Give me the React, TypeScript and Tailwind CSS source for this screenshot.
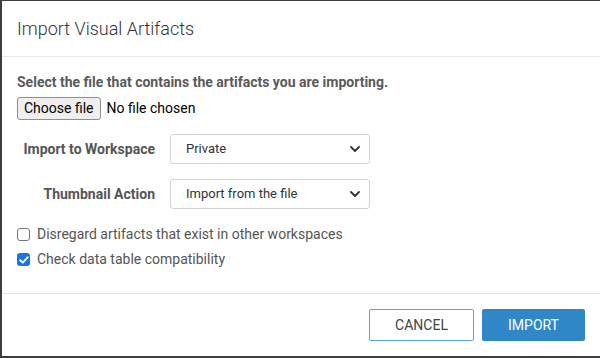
import React from 'react';

const Chevron = () => (
  <svg className="pointer-events-none absolute right-[9px] top-1/2 -translate-y-1/2" width="10" height="6" viewBox="0 0 10 6" fill="none">
    <path d="M1 1l4 4 4-4" stroke="#333" strokeWidth="1.8" strokeLinecap="round" strokeLinejoin="round" />
  </svg>
);

const FakeSelect = ({ value }: { value: string }) => (
  <div className="relative w-[200px] h-[30px] rounded-[3px] border border-[#d4d4d4] bg-white flex items-center pl-[15px] text-[13px] text-[#333]">
    {value}
    <Chevron />
  </div>
);

const Check = ({ checked, label }: { checked?: boolean; label: string }) => (
  <label className="flex items-center gap-[7px] h-[25px]">
    {checked ? (
      <span className="w-[13px] h-[13px] rounded-[3px] bg-[#1a73e8] flex items-center justify-center">
        <svg width="10" height="8" viewBox="0 0 10 8" fill="none">
          <path d="M1.2 4.2L3.8 6.6L8.8 1.2" stroke="white" strokeWidth="1.9" strokeLinecap="round" strokeLinejoin="round" />
        </svg>
      </span>
    ) : (
      <span className="w-[13px] h-[13px] rounded-[3px] border border-[#767676] bg-white" />
    )}
    <span className="text-[14px] text-[#555]">{label}</span>
  </label>
);

export default function App() {
  return (
    <div className="w-[600px] h-[358px] bg-[#3d3d3d] pt-px pl-[2px] pb-[2px] flex font-['Roboto',sans-serif]">
      <div className="flex-1 bg-white flex flex-col">
        {/* Header */}
        <div className="h-[56px] border-b border-[#e6e6e6] flex items-center px-[15px]">
          <h1 className="text-[18px] font-light text-[#333]">Import Visual Artifacts</h1>
        </div>

        {/* Body */}
        <div className="flex-1 px-[15px] pt-[15px]">
          <p className="text-[14px] leading-[20px] font-bold text-[#5a5a5a]">
            Select the file that contains the artifacts you are importing.
          </p>
          <div className="mt-[5px] flex items-center gap-[6px]">
            <span className="h-[23px] px-[6px] flex items-center rounded-[3px] border border-[#8f8f8f] bg-[#efefef] text-[14px] text-black">
              Choose file
            </span>
            <span className="text-[14px] text-black">No file chosen</span>
          </div>

          <div className="mt-[14px] flex flex-col gap-[15px]">
            <div className="flex items-center">
              <span className="w-[138px] shrink-0 whitespace-nowrap text-right text-[14px] font-bold text-[#555]">Import to Workspace</span>
              <div className="ml-[15px]">
                <FakeSelect value="Private" />
              </div>
            </div>
            <div className="flex items-center">
              <span className="w-[138px] shrink-0 whitespace-nowrap text-right text-[14px] font-bold text-[#555]">Thumbnail Action</span>
              <div className="ml-[15px]">
                <FakeSelect value="Import from the file" />
              </div>
            </div>
          </div>

          <div className="mt-[13px] flex flex-col">
            <Check label="Disregard artifacts that exist in other workspaces" />
            <Check checked label="Check data table compatibility" />
          </div>
        </div>

        {/* Footer */}
        <div className="h-[63px] border-t border-[#e6e6e6] flex items-start justify-end gap-[8px] pt-[15px] pr-[15px]">
          <button className="w-[105px] h-[32px] rounded-[2px] border border-[#5aa6dc] bg-white text-[14px] text-[#444]">
            CANCEL
          </button>
          <button className="w-[103px] h-[32px] rounded-[2px] bg-[#2f87c8] text-[14px] text-white">
            IMPORT
          </button>
        </div>
      </div>
    </div>
  );
}
